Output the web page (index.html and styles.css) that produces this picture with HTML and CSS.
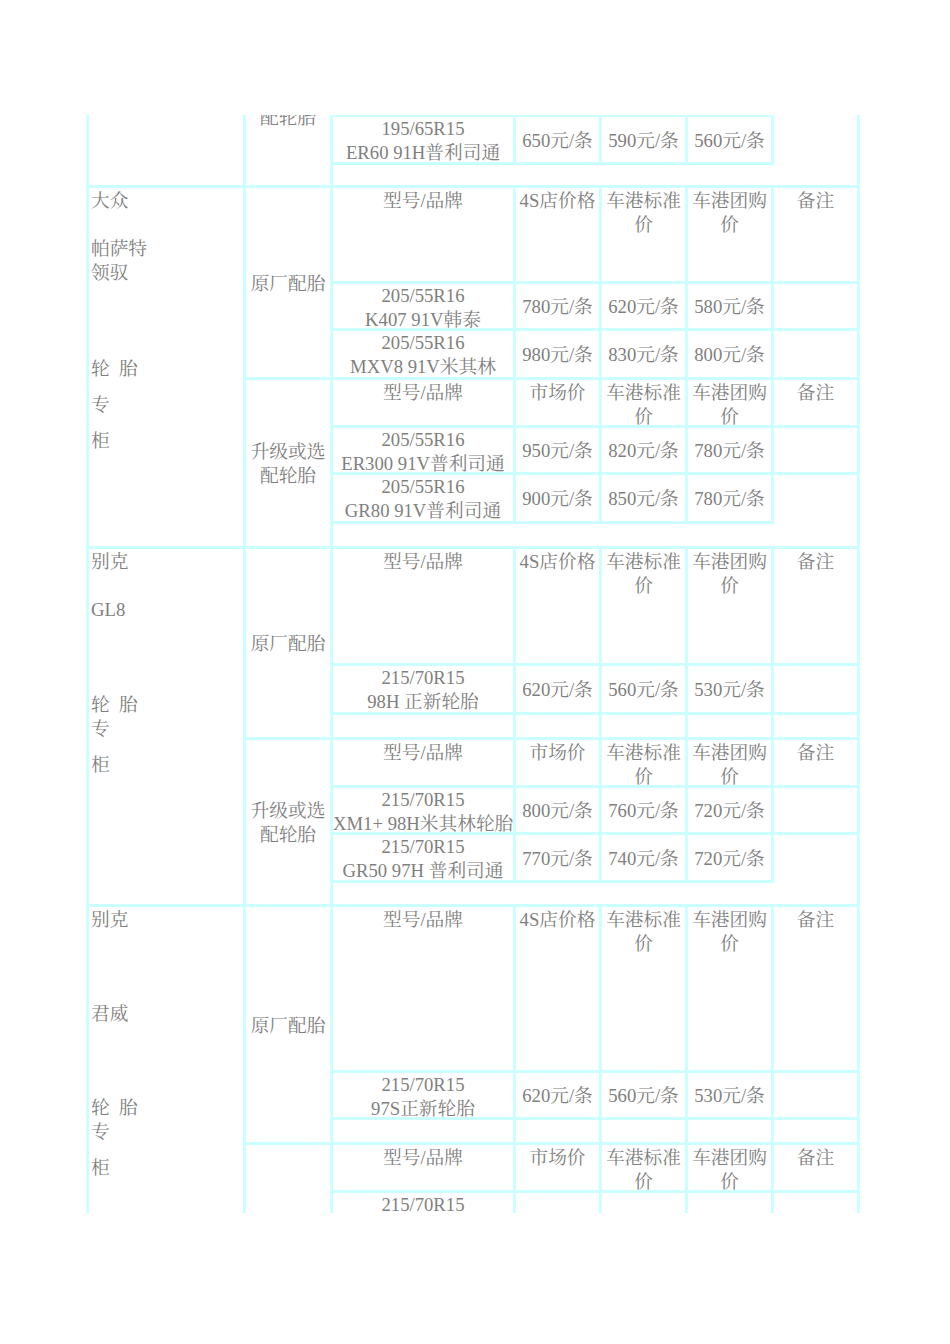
FILE: index.html
```html
<!DOCTYPE html>
<html lang="zh-CN">
<head>
<meta charset="utf-8">
<title>轮胎专柜价格表</title>
<link rel="stylesheet" href="styles.css">
</head>
<body>
<div class="clip">
  <div class="sheet">

    <div class="blk b0">
      <div class="c brand r3"></div>
      <div class="c cat r3">升级或选<br>配轮胎</div>
      <div class="c"></div><div class="c"></div><div class="c"></div><div class="c"></div>
      <div class="c r2 nb"></div>
      <div class="c model">195/65R15<br>ER60 91H普利司通</div>
      <div class="c price">650元/条</div>
      <div class="c price">590元/条</div>
      <div class="c price">560元/条</div>
      <div class="c s5 nt"></div>
    </div>

    <div class="blk b1">
      <div class="c brand r7">
        <div>大众</div>
        <div class="m24">帕萨特</div>
        <div>领驭</div>
        <div class="m72">轮&ensp;胎</div>
        <div class="m12">专</div>
        <div class="m12">柜</div>
      </div>
      <div class="c cat r3">原厂配胎</div>
      <div class="c head">型号/品牌</div>
      <div class="c head">4S店价格</div>
      <div class="c head">车港标准价</div>
      <div class="c head">车港团购价</div>
      <div class="c head">备注</div>
      <div class="c model">205/55R16<br>K407 91V韩泰</div>
      <div class="c price">780元/条</div>
      <div class="c price">620元/条</div>
      <div class="c price">580元/条</div>
      <div class="c"></div>
      <div class="c model">205/55R16<br>MXV8 91V米其林</div>
      <div class="c price">980元/条</div>
      <div class="c price">830元/条</div>
      <div class="c price">800元/条</div>
      <div class="c"></div>
      <div class="c cat r4">升级或选<br>配轮胎</div>
      <div class="c head">型号/品牌</div>
      <div class="c head">市场价</div>
      <div class="c head">车港标准价</div>
      <div class="c head">车港团购价</div>
      <div class="c head">备注</div>
      <div class="c model">205/55R16<br>ER300 91V普利司通</div>
      <div class="c price">950元/条</div>
      <div class="c price">820元/条</div>
      <div class="c price">780元/条</div>
      <div class="c"></div>
      <div class="c model">205/55R16<br>GR80 91V普利司通</div>
      <div class="c price">900元/条</div>
      <div class="c price">850元/条</div>
      <div class="c price">780元/条</div>
      <div class="c nb"></div>
      <div class="c s5 nt"></div>
    </div>

    <div class="blk b2">
      <div class="c brand r7">
        <div>别克</div>
        <div class="m24">GL8</div>
        <div class="m71">轮&ensp;胎</div>
        <div>专</div>
        <div class="m12">柜</div>
      </div>
      <div class="c cat r3">原厂配胎</div>
      <div class="c head">型号/品牌</div>
      <div class="c head">4S店价格</div>
      <div class="c head">车港标准价</div>
      <div class="c head">车港团购价</div>
      <div class="c head">备注</div>
      <div class="c model">215/70R15<br>98H 正新轮胎</div>
      <div class="c price">620元/条</div>
      <div class="c price">560元/条</div>
      <div class="c price">530元/条</div>
      <div class="c"></div>
      <div class="c"></div><div class="c"></div><div class="c"></div><div class="c"></div><div class="c"></div>
      <div class="c cat r4">升级或选<br>配轮胎</div>
      <div class="c head">型号/品牌</div>
      <div class="c head">市场价</div>
      <div class="c head">车港标准价</div>
      <div class="c head">车港团购价</div>
      <div class="c head">备注</div>
      <div class="c model">215/70R15<br>XM1+ 98H米其林轮胎</div>
      <div class="c price">800元/条</div>
      <div class="c price">760元/条</div>
      <div class="c price">720元/条</div>
      <div class="c"></div>
      <div class="c model">215/70R15<br>GR50 97H 普利司通</div>
      <div class="c price">770元/条</div>
      <div class="c price">740元/条</div>
      <div class="c price">720元/条</div>
      <div class="c nb"></div>
      <div class="c s5 nt"></div>
    </div>

    <div class="blk b3">
      <div class="c brand r8">
        <div>别克</div>
        <div class="m70">君威</div>
        <div class="m70">轮&ensp;胎</div>
        <div>专</div>
        <div class="m12">柜</div>
      </div>
      <div class="c cat r3">原厂配胎</div>
      <div class="c head">型号/品牌</div>
      <div class="c head">4S店价格</div>
      <div class="c head">车港标准价</div>
      <div class="c head">车港团购价</div>
      <div class="c head">备注</div>
      <div class="c model">215/70R15<br>97S正新轮胎</div>
      <div class="c price">620元/条</div>
      <div class="c price">560元/条</div>
      <div class="c price">530元/条</div>
      <div class="c"></div>
      <div class="c"></div><div class="c"></div><div class="c"></div><div class="c"></div><div class="c"></div>
      <div class="c cat r5"></div>
      <div class="c head">型号/品牌</div>
      <div class="c head">市场价</div>
      <div class="c head">车港标准价</div>
      <div class="c head">车港团购价</div>
      <div class="c head">备注</div>
      <div class="c model">215/70R15</div>
      <div class="c"></div><div class="c"></div><div class="c"></div><div class="c"></div>
      <div class="c"></div><div class="c"></div><div class="c"></div><div class="c"></div><div class="c"></div>
      <div class="c s5"></div>
    </div>

  </div>
</div>
</body>
</html>
```

FILE: styles.css
```css
* {
  box-sizing: border-box;
}

html,
body {
  margin: 0;
  padding: 0;
  background: #ffffff;
}

body {
  font-family: "Liberation Serif", "Noto Serif CJK SC", "Noto Sans CJK SC", serif;
  font-size: 18.7px;
  line-height: 24px;
  color: #808080;
}

.clip {
  margin-top: 115px;
  height: 1098px;
  overflow: hidden;
}

.sheet {
  margin-left: 86px;
  margin-top: -93px;
}

.blk {
  display: grid;
  grid-template-columns: 157px 87px 183px 86px 86px 86px 86px;
}

.b0 { grid-template-rows: 92px 48px 23px; }
.b1 { grid-template-rows: 96px 47px 49px 48px 47px 49px 25px; }
.b2 { grid-template-rows: 117px 49px 25px 48px 47px 48px 24px; }
.b3 { grid-template-rows: 166px 47px 25px 48px 47px 47px 48px 25px; }

.c {
  border: 3px solid #ccffff;
  margin: 0 -3px -3px 0;
  min-width: 0;
  text-align: center;
}

.nb { border-bottom: 0; }
.nt { border-top: 0; }

.r2 { grid-row: span 2; }
.r3 { grid-row: span 3; }
.r4 { grid-row: span 4; }
.r5 { grid-row: span 5; }
.r7 { grid-row: span 7; }
.r8 { grid-row: span 8; }
.s5 { grid-column: span 5; }

.brand {
  text-align: left;
  padding-left: 2px;
  padding-top: 1px;
}

.head {
  padding-top: 1px;
}

.m12 { margin-top: 12px; }
.m24 { margin-top: 24px; }
.m70 { margin-top: 70px; }
.m71 { margin-top: 71px; }
.m72 { margin-top: 72px; }

.cat {
  display: grid;
  align-content: center;
  padding-top: 2px;
}

.model {
  white-space: nowrap;
}

.price {
  display: grid;
  align-content: center;
  white-space: nowrap;
  padding-top: 2px;
}
```
